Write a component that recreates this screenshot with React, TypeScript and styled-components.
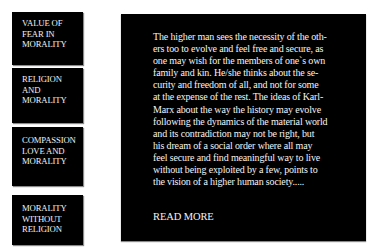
import React from 'react'
import styled, { createGlobalStyle } from 'styled-components'

const GlobalStyle = createGlobalStyle`
  html, body {
    margin: 0;
    padding: 0;
    background: #fff;
  }
  body {
    font-family: "Liberation Serif", "Times New Roman", serif;
  }
`

const Page = styled.div`
  display: flex;
  align-items: flex-start;
  gap: 38px;
  padding: 12px 0 0 12px;
  width: 379px;
  height: 252px;
  box-sizing: border-box;
`

const Sidebar = styled.div`
  display: flex;
  flex-direction: column;
  width: 71px;
`

const Topic = styled.a<{ $h: number; $gap: number; $top: number }>`
  display: block;
  height: ${(p) => p.$h}px;
  margin-bottom: ${(p) => p.$gap}px;
  box-sizing: border-box;
  padding: ${(p) => p.$top}px 3px 0 10px;
  background: #000;
  box-shadow: 1px 1px 1px #8a8a8a;
  color: #f2f2f2;
  font-size: 8.7px;
  line-height: 10.5px;
  text-transform: uppercase;
  text-decoration: none;
  letter-spacing: -0.15px;
`

const Panel = styled.div`
  margin-top: 2px;
  width: 245px;
  height: 227px;
  box-sizing: border-box;
  padding: 17px 0 0 32px;
  background: #000;
  box-shadow: 0 1px 1px #8a8a8a;
  color: #f4f4f4;
`

const Body = styled.p`
  margin: 0;
  font-size: 10px;
  line-height: 12.1px;
  letter-spacing: -0.15px;
  white-space: nowrap;
`

const More = styled.a`
  display: block;
  margin-top: 23px;
  color: #f4f4f4;
  font-size: 10.5px;
  letter-spacing: -0.1px;
  text-decoration: none;
`

const topics = [
  { label: ['Value of', 'fear in', 'morality'], h: 53, gap: 3, top: 6 },
  { label: ['Religion', 'and', 'morality'], h: 55, gap: 4, top: 6 },
  { label: ['Compassion', 'love and', 'morality'], h: 59, gap: 9, top: 8 },
  { label: ['Morality', 'without', 'religion'], h: 50, gap: 0, top: 8 },
]

const lines = [
  'The higher man sees the necessity of the oth-',
  'ers too to evolve and feel free and secure, as',
  'one may wish for the members of one`s own',
  'family and kin. He/she thinks about the se-',
  'curity and freedom of all, and not for some',
  'at the expense of the rest. The ideas of Karl-',
  'Marx about the way the history may evolve',
  'following the dynamics of the material world',
  'and its contradiction may not be right, but',
  'his dream of a social order where all may',
  'feel secure and find meaningful way to live',
  'without being exploited by a few, points to',
  'the vision of a higher human society.....',
]

export default function App() {
  return (
    <>
      <GlobalStyle />
      <Page>
        <Sidebar>
          {topics.map((t) => (
            <Topic key={t.label.join(' ')} $h={t.h} $gap={t.gap} $top={t.top} href="#">
              {t.label.map((l, i) => (
                <React.Fragment key={i}>
                  {l}
                  <br />
                </React.Fragment>
              ))}
            </Topic>
          ))}
        </Sidebar>
        <Panel>
          <Body>
            {lines.map((l, i) => (
              <React.Fragment key={i}>
                {l}
                <br />
              </React.Fragment>
            ))}
          </Body>
          <More href="#">READ MORE</More>
        </Panel>
      </Page>
    </>
  )
}
